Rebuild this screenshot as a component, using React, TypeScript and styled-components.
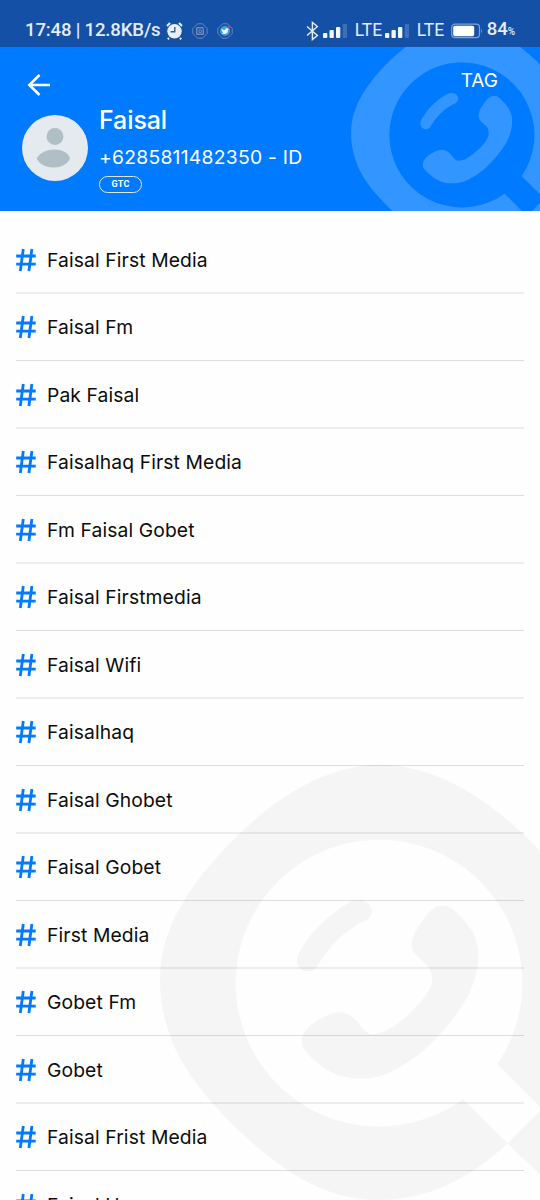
import React from 'react';
import styled, { createGlobalStyle } from 'styled-components';

const GlobalStyle = createGlobalStyle`
  html, body { margin: 0; padding: 0; background: #fff; }
  body { font-family: Inter, "Liberation Sans", sans-serif; }
  * { box-sizing: border-box; }
`;

const Screen = styled.div`
  position: relative;
  width: 540px;
  height: 1200px;
  overflow: hidden;
  display: flex;
  flex-direction: column;
  background: #fefefe;
`;

const StatusBar = styled.div`
  flex: none;
  height: 47px;
  padding: 14px 25px 0 25px;
  display: flex;
  justify-content: space-between;
  align-items: flex-start;
  background: #1450a5;
  color: #e4edfa;
  font: 500 19px/33px Roboto, sans-serif;
`;

const StatusGroup = styled.div`
  display: flex;
  align-items: center;
  height: 33px;
  white-space: nowrap;
  svg { display: block; flex: none; }
`;

const Clock = styled.span`
  width: 141px;
  font-size: 18.6px;
  letter-spacing: -0.18px;
`;

const BluetoothSlot = styled.span`
  width: 17px;
`;

const Carrier = styled.span<{ $width: number }>`
  width: ${p => p.$width}px;
  padding-left: 7px;
  font-size: 17.5px;
  font-weight: 400;
`;

const BatteryText = styled.span`
  padding-left: 3px;
  font-size: 18.6px;
  letter-spacing: -0.1px;
  small { font-size: 10px; }
`;

const Header = styled.header`
  position: relative;
  flex: none;
  height: 164px;
  overflow: hidden;
  background: #007aff;
  color: #fff;
`;

const HeaderMark = styled.svg`
  position: absolute;
  left: 345.5px;
  top: -30px;
  fill: #3395ff;
`;

const PageMark = styled.svg`
  position: absolute;
  left: 150px;
  top: 750px;
  fill: #f5f5f5;
`;

const TopRow = styled.div`
  position: relative;
  display: flex;
  justify-content: space-between;
  height: 66px;
  padding: 25px 42px 0 26px;
  svg { display: block; }
`;

const Tag = styled.span`
  font-size: 19px;
  line-height: 24px;
  margin-top: -3px;
`;

const Profile = styled.div`
  position: relative;
  display: flex;
  margin-top: -8px;
  padding-left: 22px;
  gap: 11px;
`;

const Avatar = styled.svg`
  display: block;
  margin-top: 10px;
`;

const Details = styled.div`
  display: flex;
  flex-direction: column;
  align-items: flex-start;
`;

const Name = styled.div`
  font-size: 25px;
  font-weight: 500;
  line-height: 30px;
  letter-spacing: -0.1px;
`;

const Phone = styled.div`
  margin-top: 10px;
  font-size: 19.3px;
  line-height: 24px;
  letter-spacing: 0.26px;
`;

const Badge = styled.span`
  margin-top: 7px;
  width: 43px;
  height: 17px;
  border: 1.5px solid #d5eaff;
  border-radius: 9px;
  text-align: center;
  font: 700 9px/15px Roboto, sans-serif;
  letter-spacing: 0.2px;
`;

const List = styled.ul`
  position: relative;
  list-style: none;
  margin: 0;
  padding: 15px 16px 0;
`;

const Item = styled.li`
  display: flex;
  align-items: center;
  gap: 11px;
  height: 68px;
  border-bottom: 2px solid rgba(0, 0, 0, 0.065);
  color: #0c0c0c;
  font-size: 19.3px;
  letter-spacing: 0.11px;
  line-height: 24px;
  padding-top: 1px;
  &:nth-child(even) {
    height: 67px;
    padding: 0 0 1px;
    border-bottom: 1px solid rgba(0, 0, 0, 0.13);
  }
  svg { display: block; flex: none; }
`;

const MarkShape = () => (
  <>
    <path
      fillRule="evenodd"
      d="M690 45C840 45 985 126 1115 248C1235 360 1350 500 1350 690C1350 840 1280 965 1170 1070L1042 942A430 430 0 1 0 940 1047L1073 1180C960 1287 830 1350 690 1350C590 1350 505 1322 412 1260C330 1203 252 1134 185 1057C120 980 80 920 60 856C38 795 30 745 30 690C30 605 55 528 100 455C145 380 205 312 272 248C400 126 540 45 690 45Z"
    />
    <path d="M1073 1180L1170 1083L1370 1283L1370 1472Z" />
    <path d="M628 451C658 450 674 482 661 499C652 514 636 515 617 527C566 559 530 600 503 646C491 672 451 673 441 639C438 619 451 602 464 581C500 527 555 480 606 454Q616 450 628 451Z" />
    <path d="M858 471Q882 460 905 475C950 512 984 559 985 611C986 690 953 751 900 817C853 876 795 932 721 966C675 989 606 993 558 973C520 957 484 926 461 898Q453 885 457 862C467 829 508 805 546 790Q580 781 606 800C627 814 637 844 662 852C685 855 718 840 746 818C787 786 822 752 843 709Q851 680 838 655C821 632 799 624 787 598C780 576 794 549 808 527C823 504 836 483 858 471Z" />
  </>
);

const Hash = () => (
  <svg width="20" height="24" viewBox="0 0 20 24" fill="none" stroke="#007aff" strokeWidth="2.8">
    <path d="M0.2 8H19.7M0.2 16.1H19.7M7.3 1L4.3 23M15.9 1L12.9 23" />
  </svg>
);

const Alarm = () => (
  <svg width="17" height="18" viewBox="0 0 17 18">
    <circle cx="8.5" cy="9.3" r="7.2" fill="#e6effb" />
    <path d="M1 4L4 1M16 4L13 1M3 16L1.8 17.3M14 16L15.2 17.3" stroke="#e6effb" strokeWidth="2" />
    <path d="M8.8 5V9.7H4.6" stroke="#2b62ad" strokeWidth="1.4" fill="none" />
  </svg>
);

const Outline = 'M5.5 .8H10.5L15.2 5.5V10.5L10.5 15.2H5.5L.8 10.5V5.5Z';

const NotificationIcon = styled.svg`
  margin-left: 9px;
`;

const CameraIcon = () => (
  <NotificationIcon width="16" height="16" viewBox="0 0 16 16" fill="none" stroke="#8295bb">
    <path d={Outline} strokeWidth=".8" />
    <rect x="4.8" y="4.8" width="6.4" height="6.4" stroke="#a6aec5" strokeWidth=".9" />
    <path d="M7 6.5V9.5H9.3V7H7" strokeWidth=".8" />
    <path d="M11.3 4.5V7" stroke="#c34b58" />
  </NotificationIcon>
);

const BirdIcon = () => (
  <NotificationIcon width="16" height="16" viewBox="0 0 16 16" fill="none">
    <path d={Outline} stroke="#8295bb" strokeWidth=".8" />
    <circle cx="8" cy="8" r="5" fill="#3d9ee0" />
    <path d="M4.5 5.5Q6 7.2 8 7Q8 5 9.8 5.3L12 5.8L11 7Q11 11 7.3 11L4.8 10.4L6 9.5Q4.3 8 4.5 5.5Z" fill="#f2f9ff" />
    <circle cx="12" cy="4.3" r="1.2" fill="#b24661" />
  </NotificationIcon>
);

const Bluetooth = () => (
  <svg width="13" height="20" viewBox="0 0 13 20" fill="none" stroke="#e4edfa" strokeWidth="1.4">
    <path d="M1 5.5L11.4 14.5L6.4 18.6V1.4L11.4 5.5L1 14.5" />
  </svg>
);

const Signal = () => (
  <svg width="25" height="16" viewBox="0 0 25 16" fill="#f2f7ff">
    <rect x="0" y="10" width="4.3" height="5" rx="1" />
    <rect x="6.5" y="7" width="4.3" height="8" rx="1" />
    <rect x="13" y="4" width="4.3" height="11" rx="1" />
    <rect x="19.7" y="1" width="4.3" height="14" rx="1" fill="#3e70b7" />
  </svg>
);

const Battery = () => (
  <svg width="33" height="16" viewBox="0 0 33 16">
    <rect x=".7" y="1.2" width="27.8" height="13.4" rx="3.3" fill="none" stroke="#7fa3d5" strokeWidth="1.2" />
    <rect x="2.2" y="2.7" width="21" height="10.5" rx="1.8" fill="#fff" />
    <path d="M30.2 5.3Q32 8 30.2 10.7Z" fill="#7fa3d5" />
  </svg>
);

const names = [
  'Faisal First Media', 'Faisal Fm', 'Pak Faisal', 'Faisalhaq First Media', 'Fm Faisal Gobet',
  'Faisal Firstmedia', 'Faisal Wifi', 'Faisalhaq', 'Faisal Ghobet', 'Faisal Gobet',
  'First Media', 'Gobet Fm', 'Gobet', 'Faisal Frist Media', 'Faisal Us',
];

export default function App() {
  return (
    <Screen>
      <GlobalStyle />
      <PageMark width="390" height="450" viewBox="0 0 1170 1350"><MarkShape /></PageMark>
      <StatusBar>
        <StatusGroup>
          <Clock>17:48 | 12.8KB/s</Clock>
          <Alarm />
          <CameraIcon />
          <BirdIcon />
        </StatusGroup>
        <StatusGroup>
          <BluetoothSlot><Bluetooth /></BluetoothSlot>
          <Signal />
          <Carrier $width={37}>LTE</Carrier>
          <Signal />
          <Carrier $width={41}>LTE</Carrier>
          <Battery />
          <BatteryText>84<small>%</small></BatteryText>
        </StatusGroup>
      </StatusBar>
      <Header>
        <HeaderMark width="195" height="232" viewBox="0 0 1156 1375"><MarkShape /></HeaderMark>
        <TopRow>
          <svg width="26" height="26" viewBox="0 0 26 26" fill="none" stroke="#fff" strokeWidth="2.5">
            <path d="M24 13H3M13.5 3L3.3 13L13.5 23" />
          </svg>
          <Tag>TAG</Tag>
        </TopRow>
        <Profile>
          <Avatar width="66" height="66" viewBox="0 0 66 66">
            <circle cx="33" cy="33" r="33" fill="#e4eaee" />
            <circle cx="33" cy="21.5" r="8.4" fill="#b0bec5" />
            <path d="M14.6 43.5C21 31.5 45 31.5 48 43.5C43 55.5 20.5 55.5 14.6 43.5Z" fill="#b0bec5" />
          </Avatar>
          <Details>
            <Name>Faisal</Name>
            <Phone>+6285811482350 - ID</Phone>
            <Badge>GTC</Badge>
          </Details>
        </Profile>
      </Header>
      <List>
        {names.map(name => (
          <Item key={name}><Hash />{name}</Item>
        ))}
      </List>
    </Screen>
  );
}
